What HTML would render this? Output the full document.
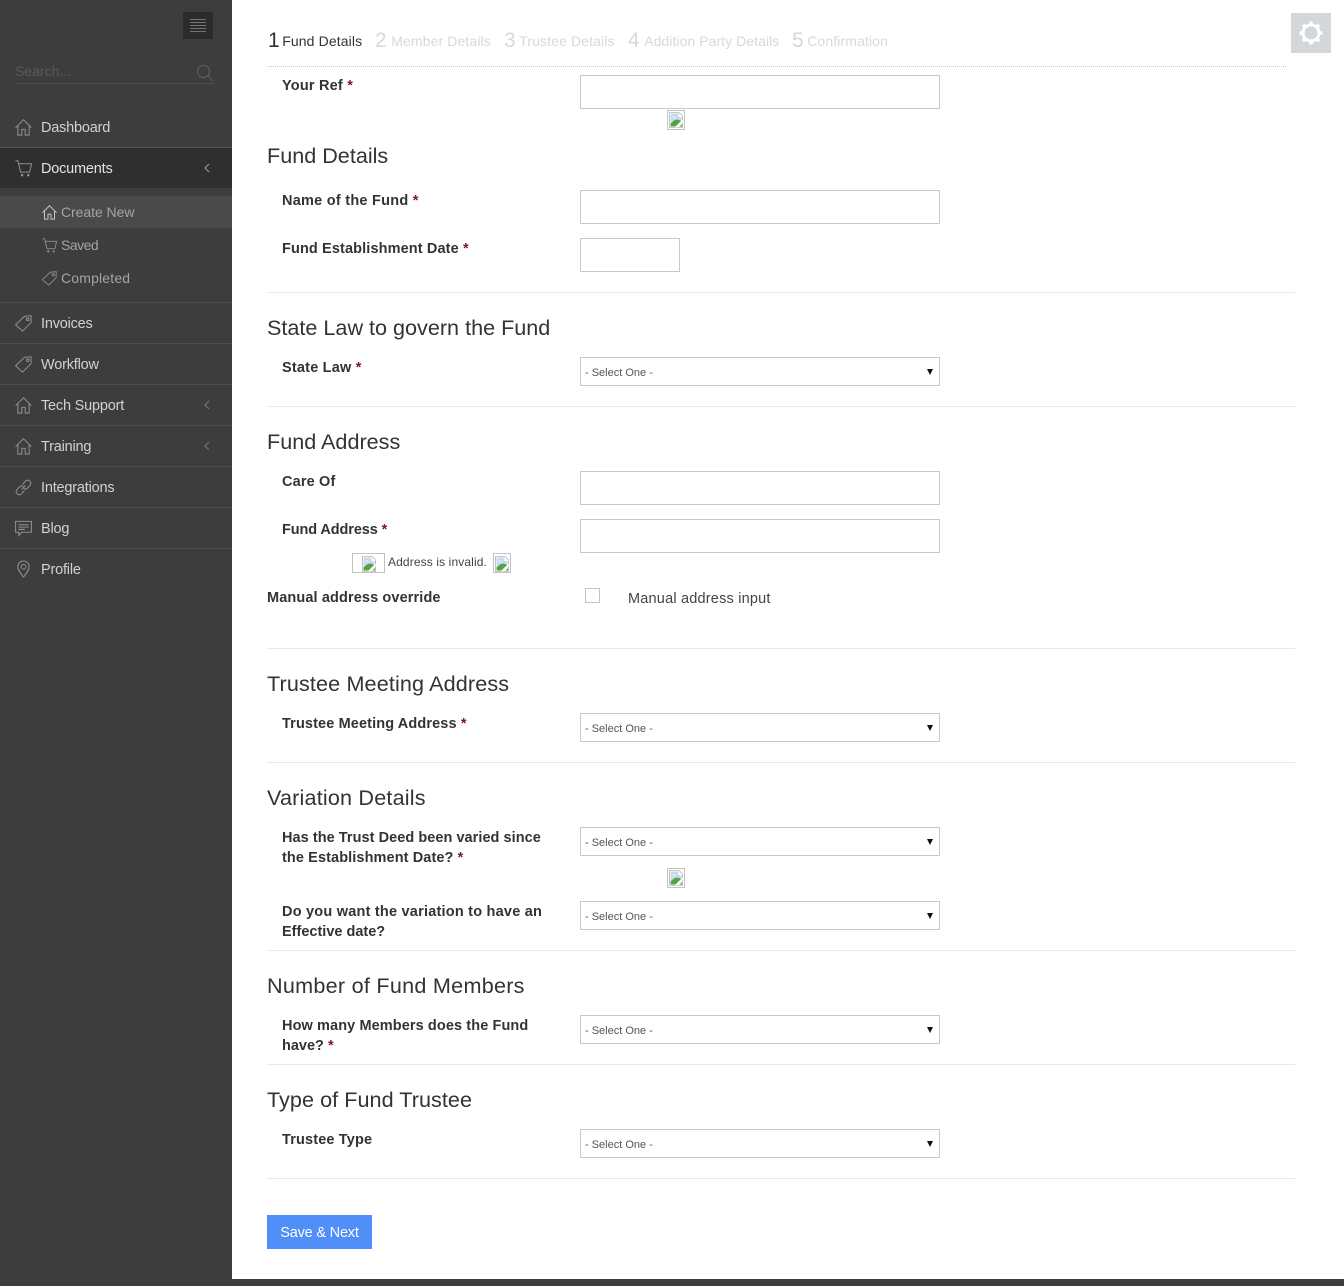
<!DOCTYPE html>
<html><head><meta charset="utf-8"><style>
*{box-sizing:border-box}
html,body{margin:0;padding:0;background:#3d3d3d}
body{width:1344px;height:1286px;position:relative;overflow:hidden;font-family:"Liberation Sans",sans-serif}
.a{position:absolute;white-space:nowrap}
#main{position:absolute;left:232px;top:0;width:1112px;height:1279px;background:#fff}
.nav{color:#d2d2d2;font-size:14.5px;letter-spacing:-.2px;line-height:20px;left:41px;margin-top:1px}
.sub{color:#a4a4a4;font-size:14px;letter-spacing:-.05px;line-height:20px;left:61px}
.sep{position:absolute;left:0;width:232px;height:1px;background:#4d4d4d}
svg.i{position:absolute;fill:none;stroke:#8f8f8f;stroke-width:1.1}
.h{position:absolute;left:267px;color:#333;font-size:21.6px;line-height:26px;white-space:nowrap}
.l{position:absolute;left:282px;color:#333;font-size:14.5px;font-weight:bold;line-height:20px;white-space:nowrap;letter-spacing:.12px;margin-top:1px}
.l b{color:#7a1a1f}
.inp{position:absolute;left:580px;width:360px;height:34px;border:1px solid #c8c8c8;background:#fff}
.sel{position:absolute;left:580px;width:360px;height:29px;border:1px solid #c8c8c8;background:#fff;color:#555;font-size:11px;line-height:30px;padding-left:4px}
.sel:after{content:"";position:absolute;right:6px;top:11px;border-left:3.5px solid transparent;border-right:3.5px solid transparent;border-top:6px solid #111}
.hr{position:absolute;left:267px;width:1028px;height:1px;background:#e8e8e8}
.s{position:absolute;top:29px;white-space:nowrap;color:#d8d8d8;font-size:14px;line-height:24px;letter-spacing:.12px}
.s span{font-size:21px;vertical-align:-1px;margin-right:3.5px;font-weight:normal;letter-spacing:0}
.br{position:absolute;width:18px;height:20px;border:1px solid #c3c3c3;background:#fff}
</style></head><body>

<svg width="0" height="0" style="position:absolute"><defs>
<symbol id="home" viewBox="0 0 18 18"><path d="M.6 9.200L9 .8l8.400 8.400M3 7.200v9.800h4.200v-6h3.600v6H15V7.200"/></symbol>
<symbol id="cart" viewBox="0 0 18 18"><path d="M.5 .8h2.500L6 12.800h9.500L17.500 4H3.800"/><circle cx="7.500" cy="16" r=".8" fill="#8f8f8f"/><circle cx="14" cy="16" r=".8" fill="#8f8f8f"/></symbol>
<symbol id="tag" viewBox="0 0 18 18"><path d="M.6 10.300L10 1.500l7-.8v7.300L8 17z"/><circle cx="13.500" cy="4.500" r="1.400"/></symbol>
<symbol id="link" viewBox="0 0 18 18"><path d="M7 11l4-4M8 6l3-3.700a3.300 3.300 0 0 1 4.800 4.600L12.300 10.500a3 3 0 0 1-3-.7M10 12l-3 3.700a3.300 3.300 0 0 1-4.800-4.600L5.700 7.500a3 3 0 0 1 3 .7"/></symbol>
<symbol id="chat" viewBox="0 0 18 18"><path d="M.6 1.500h16.800v11.500H7l-3 3.500v-3.500H.6zM3.500 5h11M3.500 7.500h11M3.500 10h7"/></symbol>
<symbol id="pin" viewBox="0 0 18 18"><path d="M9 17.500C6 13.500 3 10 3 6.500a6 6 0 0 1 12 0C15 10 12 13.500 9 17.500z"/><circle cx="9" cy="6.600" r="2.500"/></symbol>
<symbol id="broken" viewBox="0 0 16 16"><path d="M1.500 .5H11L14.500 4v11.500H1.500z" fill="#fff" stroke="#b5b5b5" stroke-width=".8"/><path d="M2.500 1.500H10.500V5H13.500V11H2.500z" fill="#c9d9f0" stroke="none"/><path d="M4 5.500c1.500-1.500 3-1 4 0z" fill="#fff" stroke="none"/><path d="M2.500 14.500V11.500L6 8.500c2.500-1.500 5-1 7 .5l-5.500 5.500z" fill="#4fa53e" stroke="none"/><path d="M8 15.500l7-7" stroke="#fff" stroke-width="1.600" fill="none"/><path d="M11.500 14.500l2.500-2.500v2.500z" fill="#4fa53e" stroke="none"/></symbol>
</defs></svg>

<!-- sidebar -->
<div class="a" style="left:183px;top:12px;width:30px;height:27px;background:#2b2b2b"></div>
<div class="a" style="left:190px;top:19px;width:16px;height:1px;background:#757575"></div>
<div class="a" style="left:190px;top:22px;width:16px;height:1px;background:#757575"></div>
<div class="a" style="left:190px;top:25px;width:16px;height:1px;background:#757575"></div>
<div class="a" style="left:190px;top:28px;width:16px;height:1px;background:#757575"></div>
<div class="a" style="left:190px;top:31px;width:16px;height:1px;background:#757575"></div>
<div class="a" style="left:15px;top:61px;color:#5a5a5a;font-size:14px;line-height:20px;letter-spacing:0">Search...</div>
<div class="a" style="left:15px;top:83px;width:199px;height:1px;background:#4e4e4e"></div>
<svg class="i" style="left:196px;top:64px;stroke:#5f5f5f" width="18" height="18" viewBox="0 0 18 18"><circle cx="7.500" cy="7.500" r="6"/><path d="M12 12l5 5"/></svg>

<svg class="i" style="left:15px;top:119px" width="17" height="17"><use href="#home"/></svg>
<div class="a nav" style="top:117px">Dashboard</div>
<div class="sep" style="top:147px;background:#555"></div>
<div class="a" style="left:0;top:148px;width:232px;height:40px;background:#2f2f2f"></div>
<svg class="i" style="left:15px;top:160px" width="17" height="17"><use href="#cart"/></svg>
<div class="a nav" style="top:158px;color:#e2e2e2">Documents</div>
<svg class="i" style="left:203px;top:163px;stroke:#999" width="8" height="10" viewBox="0 0 8 10"><path d="M6 1L2 5l4 4"/></svg>

<div class="a" style="left:0;top:196px;width:232px;height:32px;background:#4a4a4a"></div>
<svg class="i" style="left:42px;top:205px;stroke:#d0d0d0" width="15" height="15"><use href="#home"/></svg>
<div class="a sub" style="top:202px">Create New</div>
<svg class="i" style="left:42px;top:238px" width="15" height="15"><use href="#cart"/></svg>
<div class="a sub" style="top:235px;letter-spacing:-.5px">Saved</div>
<svg class="i" style="left:42px;top:271px" width="15" height="15"><use href="#tag"/></svg>
<div class="a sub" style="top:268px;letter-spacing:.17px">Completed</div>

<div class="sep" style="top:302px"></div>
<svg class="i" style="left:15px;top:315px" width="17" height="17"><use href="#tag"/></svg>
<div class="a nav" style="top:313px">Invoices</div>
<div class="sep" style="top:343px"></div>
<svg class="i" style="left:15px;top:356px" width="17" height="17"><use href="#tag"/></svg>
<div class="a nav" style="top:354px">Workflow</div>
<div class="sep" style="top:384px"></div>
<svg class="i" style="left:15px;top:397px" width="17" height="17"><use href="#home"/></svg>
<div class="a nav" style="top:395px">Tech Support</div>
<svg class="i" style="left:203px;top:400px;stroke:#777" width="8" height="10" viewBox="0 0 8 10"><path d="M6 1L2 5l4 4"/></svg>
<div class="sep" style="top:425px"></div>
<svg class="i" style="left:15px;top:438px" width="17" height="17"><use href="#home"/></svg>
<div class="a nav" style="top:436px">Training</div>
<svg class="i" style="left:203px;top:441px;stroke:#777" width="8" height="10" viewBox="0 0 8 10"><path d="M6 1L2 5l4 4"/></svg>
<div class="sep" style="top:466px"></div>
<svg class="i" style="left:15px;top:479px" width="17" height="17"><use href="#link"/></svg>
<div class="a nav" style="top:477px">Integrations</div>
<div class="sep" style="top:507px"></div>
<svg class="i" style="left:15px;top:520px" width="17" height="17"><use href="#chat"/></svg>
<div class="a nav" style="top:518px">Blog</div>
<div class="sep" style="top:548px"></div>
<svg class="i" style="left:15px;top:560px" width="17" height="18"><use href="#pin"/></svg>
<div class="a nav" style="top:559px">Profile</div>

<div id="main"></div>

<!-- steps -->
<div class="s" style="left:268px;color:#333"><span style="color:#333;margin-right:2.500px">1</span>Fund Details</div>
<div class="s" style="left:375px"><span style="margin-right:4.500px">2</span>Member Details</div>
<div class="s" style="left:504px"><span>3</span>Trustee Details</div>
<div class="s" style="left:628px;letter-spacing:.06px"><span style="margin-right:4.500px">4</span>Addition Party Details</div>
<div class="s" style="left:792px"><span>5</span>Confirmation</div>
<div class="a" style="left:267px;top:66px;width:1019px;border-top:1px dotted #c4c4c4"></div>
<div class="a" style="left:1291px;top:13px;width:40px;height:40px;background:#d3d7da"></div>
<svg class="a" style="left:1298px;top:20px" width="26" height="26" viewBox="0 0 26 26"><circle cx="13" cy="13" r="8" fill="none" stroke="#fff" stroke-width="3"/><path d="M13 1.500v4M13 20.500v4M1.500 13h4M20.500 13h4M4.900 4.900l2.800 2.800M18.300 18.300l2.800 2.800M21.100 4.900l-2.800 2.800M7.700 18.300l-2.800 2.800" stroke="#fff" stroke-width="3.500"/></svg>

<!-- form -->
<div class="l" style="top:75px;letter-spacing:.2px">Your Ref <b>*</b></div>
<div class="inp" style="top:75px"></div>
<div class="br" style="left:667px;top:110px"><svg style="position:absolute;left:0;top:1px" width="16" height="16"><use href="#broken"/></svg></div>

<div class="h" style="top:143px">Fund Details</div>
<div class="l" style="top:190px;letter-spacing:.25px">Name of the Fund <b>*</b></div>
<div class="inp" style="top:190px"></div>
<div class="l" style="top:238px">Fund Establishment Date <b>*</b></div>
<div class="inp" style="top:238px;width:100px"></div>
<div class="hr" style="top:292px"></div>

<div class="h" style="top:315px">State Law to govern the Fund</div>
<div class="l" style="top:357px;letter-spacing:.2px">State Law <b>*</b></div>
<div class="sel" style="top:357px">- Select One -</div>
<div class="hr" style="top:406px"></div>

<div class="h" style="top:429px">Fund Address</div>
<div class="l" style="top:471px;letter-spacing:.15px">Care Of</div>
<div class="inp" style="top:471px"></div>
<div class="l" style="top:519px;letter-spacing:-.1px">Fund Address <b>*</b></div>
<div class="inp" style="top:519px"></div>
<div class="br" style="left:352px;top:553px;width:33px"><svg style="position:absolute;left:8px;top:2px" width="16" height="16"><use href="#broken"/></svg></div>
<div class="a" style="left:388px;top:554px;color:#444;font-size:12px;line-height:16px;letter-spacing:.12px">Address is invalid.</div>
<div class="br" style="left:493px;top:553px"><svg style="position:absolute;left:0;top:2px" width="16" height="16"><use href="#broken"/></svg></div>
<div class="l" style="left:267px;top:587px">Manual address override</div>
<div class="a" style="left:585px;top:588px;width:15px;height:15px;border:1px solid #c4c4c4;background:#fff"></div>
<div class="a" style="left:628px;top:589px;color:#444;font-size:14.500px;line-height:20px;letter-spacing:.2px">Manual address input</div>
<div class="hr" style="top:648px"></div>

<div class="h" style="top:671px;letter-spacing:.13px">Trustee Meeting Address</div>
<div class="l" style="top:713px">Trustee Meeting Address <b>*</b></div>
<div class="sel" style="top:713px">- Select One -</div>
<div class="hr" style="top:762px"></div>

<div class="h" style="top:785px;letter-spacing:.18px">Variation Details</div>
<div class="l" style="top:827px;letter-spacing:.05px">Has the Trust Deed been varied since<br><span style="letter-spacing:.1px">the Establishment Date? <b>*</b></span></div>
<div class="sel" style="top:827px">- Select One -</div>
<div class="br" style="left:667px;top:868px"><svg style="position:absolute;left:0;top:1px" width="16" height="16"><use href="#broken"/></svg></div>
<div class="l" style="top:901px;letter-spacing:.22px">Do you want the variation to have an<br><span style="letter-spacing:0">Effective date?</span></div>
<div class="sel" style="top:901px">- Select One -</div>
<div class="hr" style="top:950px"></div>

<div class="h" style="top:973px;letter-spacing:.26px">Number of Fund Members</div>
<div class="l" style="top:1015px;letter-spacing:.1px">How many Members does the Fund<br><span style="letter-spacing:0">have? <b>*</b></span></div>
<div class="sel" style="top:1015px">- Select One -</div>
<div class="hr" style="top:1064px"></div>

<div class="h" style="top:1087px;letter-spacing:.05px">Type of Fund Trustee</div>
<div class="l" style="top:1129px;letter-spacing:.15px">Trustee Type</div>
<div class="sel" style="top:1129px">- Select One -</div>
<div class="hr" style="top:1178px"></div>

<div class="a" style="left:267px;top:1215px;width:105px;height:34px;background:#4f8ff7;color:#fff;font-size:14.500px;line-height:36px;text-align:center;letter-spacing:-.2px">Save &amp; Next</div>
</body></html>
